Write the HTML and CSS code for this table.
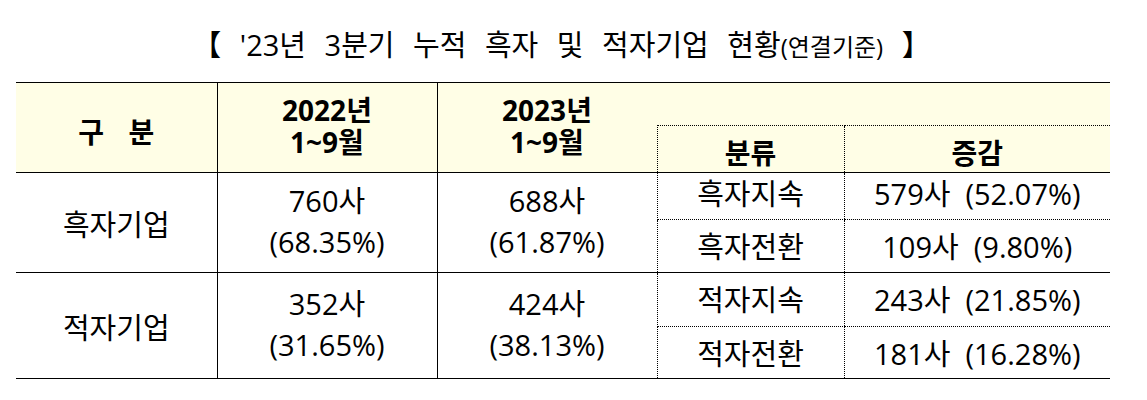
FILE: index.html
```html
<!DOCTYPE html>
<html lang="ko">
<head>
<meta charset="utf-8">
<link rel="stylesheet" href="styles.css">
</head>
<body>
<div class="page">
  <div class="title">【 '23년 3분기 누적 흑자 및 적자기업 현황<span class="sub">(연결기준)</span> 】</div>
  <table class="stats">
    <colgroup>
      <col class="c1"><col class="c2"><col class="c3"><col class="c4"><col class="c5">
    </colgroup>
    <thead>
      <tr class="h1">
        <th rowspan="2" class="gubun">구 분</th>
        <th rowspan="2" class="year"><span class="ln">2022년</span><span class="ln">1~9월</span></th>
        <th rowspan="2" class="year y2"><span class="ln">2023년</span><span class="ln">1~9월</span></th>
        <th colspan="2" class="blank"></th>
      </tr>
      <tr class="h2">
        <th class="sub-h">분류</th>
        <th class="sub-h last">증감</th>
      </tr>
    </thead>
    <tbody>
      <tr class="r1">
        <td rowspan="2" class="name">흑자기업</td>
        <td rowspan="2" class="val">760사<br>(68.35%)</td>
        <td rowspan="2" class="val v2">688사<br>(61.87%)</td>
        <td class="kind top">흑자지속</td>
        <td class="chg top">579사&nbsp; (52.07%)</td>
      </tr>
      <tr class="r2">
        <td class="kind bot">흑자전환</td>
        <td class="chg bot">109사&nbsp; (9.80%)</td>
      </tr>
      <tr class="r3">
        <td rowspan="2" class="name">적자기업</td>
        <td rowspan="2" class="val">352사<br>(31.65%)</td>
        <td rowspan="2" class="val v2">424사<br>(38.13%)</td>
        <td class="kind top">적자지속</td>
        <td class="chg top">243사&nbsp; (21.85%)</td>
      </tr>
      <tr class="r4">
        <td class="kind bot">적자전환</td>
        <td class="chg bot">181사&nbsp; (16.28%)</td>
      </tr>
    </tbody>
  </table>
</div>
</body>
</html>
```

FILE: styles.css
```css
html, body {
  margin: 0;
  padding: 0;
  background: #ffffff;
}

body {
  font-family: "Open Sans", "Noto Sans CJK KR", sans-serif;
  color: #000;
}

.page {
  width: 1147px;
  height: 400px;
  box-sizing: border-box;
  padding-left: 16px;
}

.title {
  box-sizing: border-box;
  height: 82px;
  padding-top: 26px;
  line-height: 38px;
  font-size: 29px;
  word-spacing: 11px;
  text-align: center;
  padding-right: 40px;
  white-space: nowrap;
}

.title .sub {
  font-size: 24px;
  word-spacing: 0;
}

.stats {
  border-collapse: collapse;
  table-layout: fixed;
  width: 1094px;
}

.c1 { width: 201px; }
.c2 { width: 220px; }
.c3 { width: 220px; }
.c4 { width: 187px; }
.c5 { width: 266px; }

.stats th,
.stats td {
  padding: 0;
  text-align: center;
  vertical-align: middle;
}

.stats thead th {
  background: #fffee6;
  font-weight: bold;
  border-top: 1px solid #000;
  border-bottom: 1px solid #000;
  font-size: 28px;
}

.h1 { height: 43px; }
.h2 { height: 44px; }
.r1 { height: 47px; }
.r2 { height: 53px; }
.r3 { height: 54px; }
.r4 { height: 52px; }

.gubun {
  word-spacing: 17px;
  border-right: 1px solid #000;
  padding-top: 6px !important;
}

.year {
  border-right: 1px solid #000;
  padding-bottom: 4px !important;
}

.year .ln {
  display: block;
  height: 32px;
  line-height: 32px;
}

.year.y2 {
  border-right: none;
}

.blank {
  border-bottom: none !important;
}

.sub-h {
  border-top: 1px dotted #000 !important;
  border-left: 1px dotted #000;
  padding-top: 6px !important;
}

.stats tbody td {
  font-size: 29px;
  font-weight: normal;
}

.name {
  border-right: 1px solid #000;
  border-bottom: 1px solid #000;
}

.val {
  line-height: 41px;
  border-right: 1px solid #000;
  border-bottom: 1px solid #000;
  padding-bottom: 3px !important;
}

.val.v2 {
  border-right: none;
}

.kind,
.chg {
  border-left: 1px dotted #000;
  line-height: 34px;
}

.top {
  border-bottom: 1px dotted #000;
}

.bot {
  border-bottom: 1px solid #000;
}

.r2 td,
.r4 td {
  padding-top: 2px !important;
}

.r1 td.top {
  padding-bottom: 4px !important;
}
```
